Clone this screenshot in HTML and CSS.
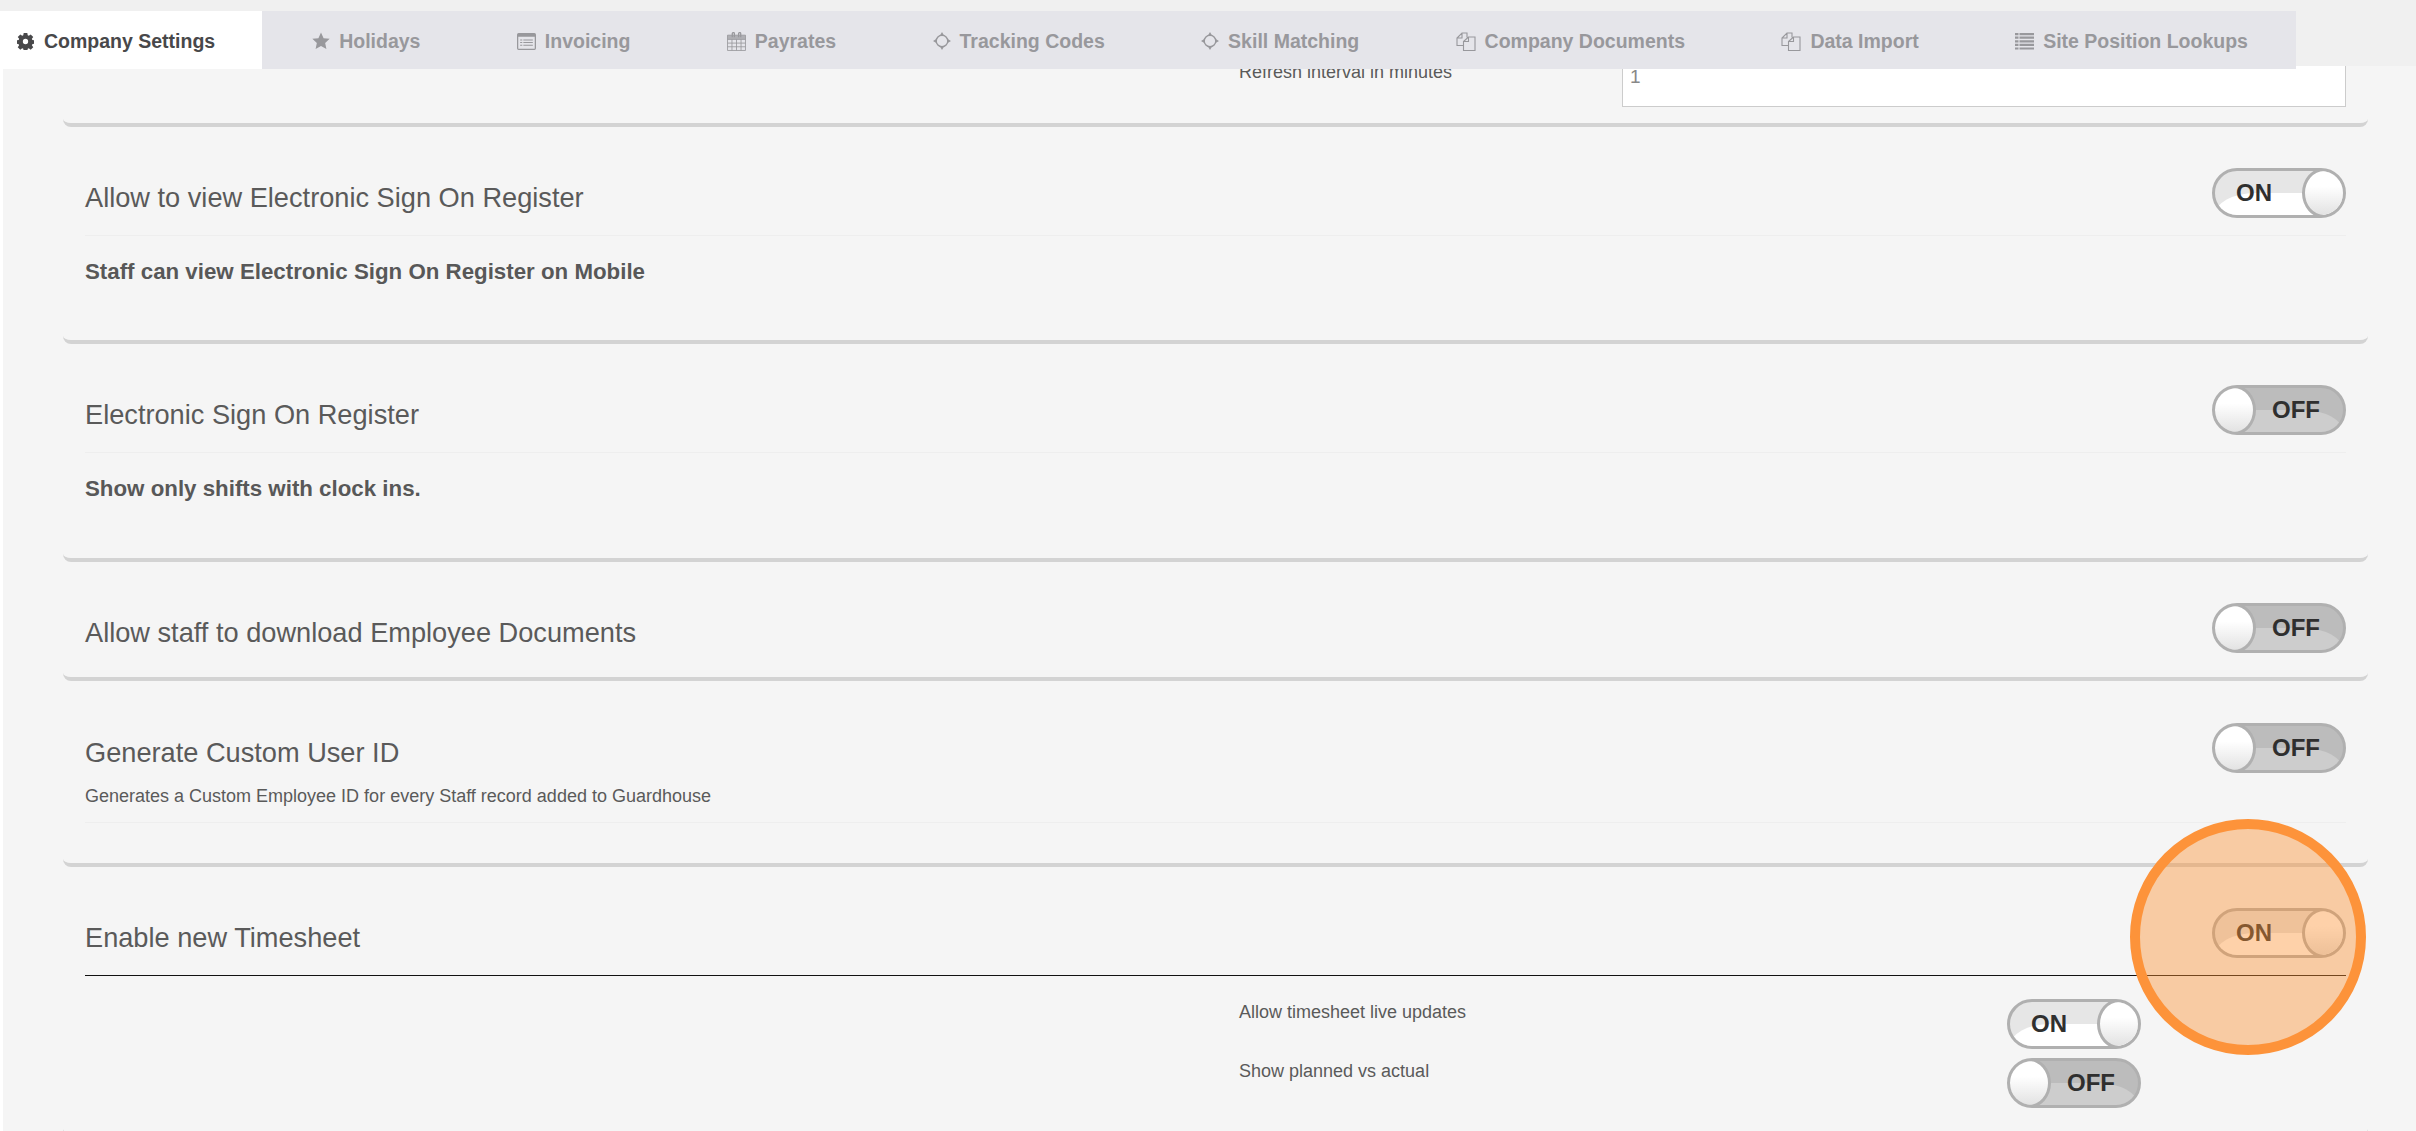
FILE: index.html
```html
<!DOCTYPE html>
<html lang="en">
  <head>
    <meta charset="UTF-8" />
    <title>Company Settings</title>
    <link rel="stylesheet" href="styles.css">
  </head>
  <body>
    <div class="tabs-wrap">
      <ul class="tabs">
        <li class="tab active">
          <svg class="ico ico-cog" viewBox="0 0 16 16"><path fill="currentColor" fill-rule="evenodd" d="M6.300 0h3.400l.4 2.200 1 .4L12.900 1.300l2.400 2.400-1.300 1.800.4 1L16 6.900v3.200l-1.600.4-.4 1 1.300 1.800-2.400 2.400-1.800-1.300-1 .4-.4 2.200H6.300l-.4-2.200-1-.4-1.800 1.300L.7 13.300 2 11.500l-.4-1L0 10.100V6.900l1.600-.4.4-1L.7 3.700 3.100 1.300 4.900 2.600l1-.4zM8 5.500a2.500 2.500 0 1 0 0 5 2.500 2.500 0 0 0 0-5z"/></svg>
          Company Settings
        </li>
        <li class="tab">
          <svg class="ico ico-mid" viewBox="0 0 16 16"><path fill="currentColor" d="M8 .5l2.300 5 5.400.6-4 3.700 1.100 5.400L8 12.500l-4.800 2.700 1.100-5.400-4-3.700 5.400-.6z"/></svg>
          Holidays
        </li>
        <li class="tab">
          <svg class="ico" viewBox="0 0 18 16"><path fill="currentColor" fill-rule="evenodd" d="M1.500 0h15A1.500 1.500 0 0 1 18 1.500v13a1.500 1.500 0 0 1-1.500 1.500h-15A1.500 1.500 0 0 1 0 14.500v-13A1.500 1.500 0 0 1 1.500 0zM1.200 3.500v10.800c0 .3.200.5.500.5h14.600c.3 0 .5-.2.500-.5V3.500zM3 6h2v1H3zm3 0h9v1H6zM3 8.500h2v1H3zm3 0h9v1H6zM3 11h2v1H3zm3 0h9v1H6z"/></svg>
          Invoicing
        </li>
        <li class="tab">
          <svg class="ico" viewBox="0 0 18 18"><path fill="none" stroke="currentColor" stroke-width=".8" d="M.5 3h17v14.500H.5zM.5 7h17M.5 10.500h17M.5 14h17M4.700 7v10.500M9 7v10.500M13.300 7v10.500"/><path fill="currentColor" opacity=".7" d="M.5 3h17v4H.5z"/><path fill="none" stroke="currentColor" stroke-width="1.200" d="M5 5V1.500a1 1 0 0 1 2 0V5M11 5V1.500a1 1 0 0 1 2 0V5"/></svg>
          Payrates
        </li>
        <li class="tab">
          <svg class="ico ico-mid" viewBox="0 0 18 18"><circle cx="9" cy="9" r="5.800" fill="none" stroke="currentColor" stroke-width="1.400"/><path fill="currentColor" d="M9 0l2.200 3.800H6.800zM9 18l-2.200-3.800h4.400zM0 9l3.800-2.200v4.400zM18 9l-3.800 2.200V6.800z"/></svg>
          Tracking Codes
        </li>
        <li class="tab">
          <svg class="ico ico-mid" viewBox="0 0 18 18"><circle cx="9" cy="9" r="5.800" fill="none" stroke="currentColor" stroke-width="1.400"/><path fill="currentColor" d="M9 0l2.200 3.800H6.800zM9 18l-2.200-3.800h4.400zM0 9l3.800-2.200v4.400zM18 9l-3.800 2.200V6.800z"/></svg>
          Skill Matching
        </li>
        <li class="tab">
          <svg class="ico ico-wide" viewBox="0 0 20 19"><path fill="none" stroke="currentColor" stroke-width="1.100" d="M7.500 13.500h-6.500V6l5-5h5v4.500M6 1v5H1M7.500 9.500l5-4.500h6.500v13.500H7.500zM12.500 5v4.500h-5"/></svg>
          Company Documents
        </li>
        <li class="tab">
          <svg class="ico ico-wide" viewBox="0 0 20 19"><path fill="none" stroke="currentColor" stroke-width="1.100" d="M7.500 13.500h-6.500V6l5-5h5v4.500M6 1v5H1M7.500 9.500l5-4.500h6.500v13.500H7.500zM12.500 5v4.500h-5"/></svg>
          Data Import
        </li>
        <li class="tab">
          <svg class="ico" viewBox="0 0 19 17"><path fill="currentColor" d="M0 0h3.500v2.200H0zm4.500 0H19v2.200H4.500zM0 3.600h3.500v2.200H0zm4.500 0H19v2.200H4.500zM0 7.200h3.500v2.200H0zm4.500 0H19v2.200H4.500zM0 10.800h3.500V13H0zm4.500 0H19V13H4.500zM0 14.400h3.500v2.200H0zm4.500 0H19v2.200H4.500z"/></svg>
          Site Position Lookups
        </li>
      </ul>
    </div>

    <div class="page">
      <section class="card card-first">
        <div class="sub-row">
          <span class="sub-label">Refresh interval in minutes</span>
          <div class="fake-input">1</div>
        </div>
      </section>

      <section class="card card-view">
        <div class="card-head">
          <h3>Allow to view Electronic Sign On Register</h3>
          <span class="toggle on"><b>ON</b><i></i></span>
        </div>
        <div class="rule"></div>
        <p class="strong-note">Staff can view Electronic Sign On Register on Mobile</p>
      </section>

      <section class="card card-view">
        <div class="card-head">
          <h3>Electronic Sign On Register</h3>
          <span class="toggle off"><i></i><b>OFF</b></span>
        </div>
        <div class="rule"></div>
        <p class="strong-note">Show only shifts with clock ins.</p>
      </section>

      <section class="card card-plain">
        <div class="card-head">
          <h3>Allow staff to download Employee Documents</h3>
          <span class="toggle off"><i></i><b>OFF</b></span>
        </div>
      </section>

      <section class="card card-custom">
        <div class="card-head">
          <h3>Generate Custom User ID</h3>
          <span class="toggle off"><i></i><b>OFF</b></span>
        </div>
        <p class="note">Generates a Custom Employee ID for every Staff record added to Guardhouse</p>
        <div class="rule"></div>
      </section>

      <section class="card card-sheet">
        <div class="card-head">
          <h3>Enable new Timesheet</h3>
          <span class="toggle on"><b>ON</b><i></i></span>
        </div>
        <div class="rule dark"></div>
        <div class="sub-row">
          <span class="sub-label">Allow timesheet live updates</span>
          <span class="toggle on"><b>ON</b><i></i></span>
        </div>
        <div class="sub-row">
          <span class="sub-label">Show planned vs actual</span>
          <span class="toggle off"><i></i><b>OFF</b></span>
        </div>
      </section>
    </div>

    <div class="spotlight"></div>
  </body>
</html>
```

FILE: styles.css
```css
* {
  box-sizing: border-box;
  margin: 0;
  padding: 0;
}
html,
body {
  height: 1131px;
  overflow: hidden;
}
body {
  position: relative;
  background: #f5f5f5;
  font-family: "Liberation Sans", Arial, sans-serif;
  color: #555;
}

/* tab bar sits over the scrolled page */
.tabs-wrap {
  position: absolute;
  top: 0;
  left: 0;
  right: 0;
  height: 66px;
  padding-top: 11px;
  background: #f0f0f0;
  z-index: 2;
}
.tabs {
  display: flex;
  list-style: none;
  width: 2296px;
  height: 58px;
  background: #e5e5ea;
}
.tab {
  display: flex;
  flex: none;
  align-items: center;
  gap: 9px;
  padding: 2px 48.2px 0;
  font-size: 19.5px;
  font-weight: 700;
  color: #98989c;
  white-space: nowrap;
}
.tab.active {
  width: 262px;
  margin-right: 2px;
  padding: 2px 0 0 17px;
  background: #fff;
  color: #48484a;
}
.ico {
  width: 19px;
  height: 19px;
  flex: none;
}
.ico-cog {
  width: 17px;
  height: 17px;
  margin-right: 1px;
}
.ico-mid {
  width: 18px;
  height: 18px;
}
.ico-wide {
  width: 20px;
}

.page {
  height: 1131px;
  margin-left: 3px;
  padding: 0 48px 0 60px;
  box-shadow: -3px 0 0 #fff;
  overflow: hidden;
}
.card {
  padding: 0 22px;
  border-bottom: 4px solid #d3d3d3;
  border-radius: 0 0 8px 8px;
}
.card-first {
  height: 127px;
  padding-top: 59px;
}
.card-view {
  height: 217px;
  padding-top: 41px;
}
.card-view + .card-view {
  height: 218px;
}
.card-plain {
  height: 119px;
  padding-top: 41px;
}
.card-custom {
  height: 186px;
  padding-top: 42px;
}
.card-sheet {
  height: 270px;
  padding-top: 41px;
}
.card-head {
  display: flex;
  align-items: center;
  justify-content: space-between;
  height: 50px;
}
.card-head h3 {
  font-size: 27.2px;
  font-weight: 400;
  color: #5a5a5a;
  position: relative;
  top: 5px;
}
.rule {
  height: 1px;
  margin-top: 17px;
  background: #eee;
}
.rule.dark {
  background: #111;
}
.strong-note {
  margin-top: 23px;
  font-size: 22.3px;
  font-weight: 700;
  color: #585858;
}
.note {
  margin-top: 13px;
  font-size: 18px;
  color: #5a5a5a;
}
.card-custom .rule {
  margin-top: 15px;
}

.sub-row {
  display: flex;
  justify-content: space-between;
  padding-left: 1154px;
}
.sub-label {
  padding-top: 3px;
  font-size: 18px;
  color: #5a5a5a;
}
.card-sheet .sub-row {
  margin-top: 23px;
  padding-right: 205px;
}
.card-sheet .sub-row + .sub-row {
  margin-top: 9px;
}
.fake-input {
  width: 724px;
  height: 48px;
  padding: 6px 7px;
  background: #fff;
  border: 1px solid #ccc;
  font-size: 19px;
  color: #888;
}

/* on/off switch */
.toggle {
  position: relative;
  display: flex;
  align-items: center;
  flex: none;
  width: 134px;
  height: 50px;
  border: 3px solid #b0b0b0;
  border-radius: 25px;
  overflow: hidden;
  color: #2f2f2f;
}
.toggle::before {
  content: "";
  position: absolute;
  left: 0;
  right: 0;
  top: 50%;
  bottom: 0;
}
.toggle b {
  position: relative;
  flex: 1;
  font-size: 24px;
  font-weight: 700;
  text-align: center;
  line-height: 1;
}
.toggle i {
  position: relative;
  flex: none;
  width: 44px;
  height: 50px;
  margin: -3px;
  border: 3px solid #b0b0b0;
  border-radius: 50%;
  background: linear-gradient(#fff, #fff 35%, #e2e2e2);
}
.toggle.on {
  background: #e6e6e6;
}
.toggle.on::before {
  background: #fff;
  border-top-left-radius: 40px 22px;
}
.toggle.on b {
  padding-right: 12px;
}
.toggle.off {
  background: #bcbcbc;
}
.toggle.off::before {
  background: #cdcdcd;
  border-top-right-radius: 40px 22px;
}
.toggle.off b {
  padding-right: 4px;
}

/* orange tutorial marker */
.spotlight {
  position: absolute;
  left: 2130px;
  top: 819px;
  width: 236px;
  height: 236px;
  border: 10px solid #fd933a;
  border-radius: 50%;
  background: rgba(253, 146, 50, 0.42);
  z-index: 3;
}
```
